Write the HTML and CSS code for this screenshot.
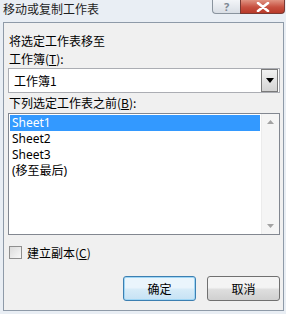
FILE: index.html
```html
<!DOCTYPE html>
<html lang="zh-CN">
<head>
    <meta charset="UTF-8">
    <title>移动或复制工作表</title>
    <link rel="stylesheet" href="styles.css">
</head>
<body>
    <div class="window">
        <div class="titlebar">
            <span class="title">移动或复制工作表</span>
            <div class="caption-btns">
                <div class="cap-btn help">?</div>
                <div class="cap-btn close">
                    <svg width="14" height="10" viewBox="0 0 14 10">
                        <path d="M2 1 L12 9 M12 1 L2 9" stroke="#fff" stroke-width="2.6" stroke-linecap="round"/>
                    </svg>
                </div>
            </div>
        </div>

        <div class="client">
            <div class="label first">将选定工作表移至</div>
            <div class="label">工作簿(<u>T</u>):</div>
            <div class="combo">
                <span class="combo-text">工作簿1</span>
                <div class="combo-btn">
                    <svg width="8" height="5" viewBox="0 0 8 5"><path d="M0 0 L8 0 L4 5 Z" fill="#000"/></svg>
                </div>
            </div>

            <div class="label">下列选定工作表之前(<u>B</u>):</div>
            <div class="listbox">
                <div class="items">
                    <div class="item selected">Sheet1</div>
                    <div class="item">Sheet2</div>
                    <div class="item">Sheet3</div>
                    <div class="item">(移至最后)</div>
                </div>
                <div class="scrollbar">
                    <svg width="7" height="4" viewBox="0 0 7 4"><path d="M0 4 L7 4 L3.5 0 Z" fill="#a3a3a3"/></svg>
                    <svg width="7" height="4" viewBox="0 0 7 4"><path d="M0 0 L7 0 L3.5 4 Z" fill="#a3a3a3"/></svg>
                </div>
            </div>

            <label class="check-row">
                <span class="checkbox"></span>
                <span>建立副本(<u>C</u>)</span>
            </label>

            <div class="buttons">
                <button class="btn default">确定</button>
                <button class="btn">取消</button>
            </div>
        </div>
    </div>
</body>
</html>
```

FILE: styles.css
```css
body {
    margin: 0;
    font-family: "Noto Sans", "Noto Sans CJK SC", sans-serif;
    font-size: 12px;
    color: #000;
    background: #e9eef4;
}
.window {
    width: 286px;
    height: 314px;
    background: #e9eef4;
    overflow: hidden;
}
.titlebar {
    height: 22px;
    display: flex;
    justify-content: space-between;
}
.title {
    padding-left: 3px;
    line-height: 18px;
    font-family: "Noto Sans CJK SC", sans-serif;
    font-size: 12px;
    color: #1e1e1e;
}
.caption-btns {
    display: flex;
    height: 14px;
    margin-right: 1px;
}
.cap-btn {
    display: flex;
    align-items: center;
    justify-content: center;
    border: 1px solid #8a949e;
    border-top: none;
    border-radius: 0 0 4px 4px;
}
.help {
    width: 27px;
    background: linear-gradient(#f3f5f8, #d9dee5);
    color: #7d8793;
    font-size: 11px;
    font-weight: bold;
    border-right: none;
    border-radius: 0 0 0 4px;
}
.close {
    width: 43px;
    background: linear-gradient(#e09382, #c75040 55%, #b83a2a);
    border-color: #7a3a33;
    border-radius: 0 0 4px 0;
}
.client {
    margin: 0 2px 0 3px;
    height: 287px;
    background: #f0f0f0;
    border: 1px solid #8e9aa8;
    padding: 0 3px 0 4px;
}
.label {
    line-height: 16px;
    padding-left: 1px;
    margin-top: 2px;
    font-family: "Noto Sans CJK SC", sans-serif;
}
.label.first {
    margin-top: 10px;
}
.combo {
    margin-top: 1px;
    height: 23px;
    background: #fff;
    border: 1px solid #abadb3;
    display: flex;
    align-items: center;
    justify-content: space-between;
}
.combo-text {
    padding-left: 5px;
    font-family: "Noto Sans CJK SC", sans-serif;
}
.combo-btn {
    width: 15px;
    height: 21px;
    border: 1px solid #7a7a7a;
    margin-right: 1px;
    background: linear-gradient(#f2f2f2, #d4d4d4);
    display: flex;
    align-items: center;
    justify-content: center;
}
.listbox {
    margin-top: 2px;
    height: 120px;
    background: #fff;
    border: 1px solid #828790;
    display: flex;
}
.items {
    flex: 1;
    padding: 1px 1px 0 1px;
}
.item {
    height: 16px;
    line-height: 16px;
    padding-left: 2px;
    font-family: "Noto Sans", "Noto Sans CJK SC", sans-serif;
}
.item.selected {
    background: #3399ff;
    color: #fff;
}
.scrollbar {
    width: 17px;
    background: #f5f5f5;
    border-left: 1px solid #ececec;
    display: flex;
    flex-direction: column;
    justify-content: space-between;
    align-items: center;
    padding: 6px 0;
}
.check-row {
    display: flex;
    align-items: center;
    gap: 5px;
    margin-top: 9px;
    padding-left: 1px;
    font-family: "Noto Sans CJK SC", sans-serif;
}
.checkbox {
    width: 11px;
    height: 11px;
    border: 1px solid #8f8f8f;
    background: linear-gradient(135deg, #dcdcdc, #f8f8f8);
}
.buttons {
    display: flex;
    justify-content: flex-end;
    gap: 11px;
    margin-top: 15px;
}
.btn {
    width: 73px;
    height: 25px;
    border: 1px solid #707070;
    border-radius: 3px;
    background: linear-gradient(#f4f4f4 45%, #dedede 55%, #d0d0d0);
    font-family: "Noto Sans CJK SC", sans-serif;
    font-size: 12px;
    color: #000;
    padding: 0;
}
.btn.default {
    border-color: #3c7fb1;
    box-shadow: inset 0 0 0 1px #9fd6f5;
    background: linear-gradient(#eaf5fc 45%, #d6ebf8 55%, #c6e2f4);
}
```
